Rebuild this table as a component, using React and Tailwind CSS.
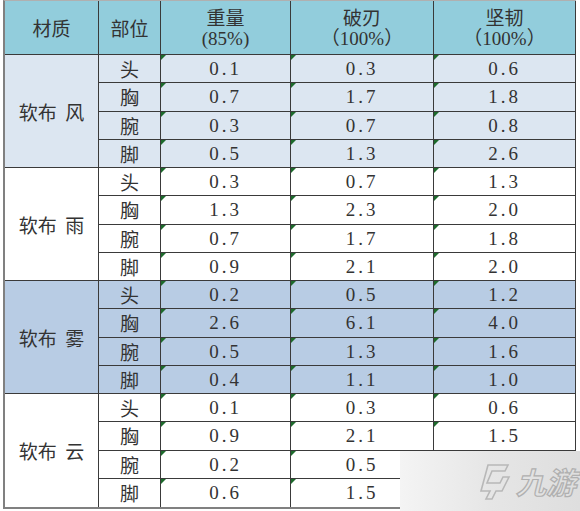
const groups = [
  {
    name: '软布 风',
    bg: 'bg-[#dce6f1]',
    rows: [
      ['头', '0.1', '0.3', '0.6'],
      ['胸', '0.7', '1.7', '1.8'],
      ['腕', '0.3', '0.7', '0.8'],
      ['脚', '0.5', '1.3', '2.6'],
    ],
  },
  {
    name: '软布 雨',
    bg: 'bg-white',
    rows: [
      ['头', '0.3', '0.7', '1.3'],
      ['胸', '1.3', '2.3', '2.0'],
      ['腕', '0.7', '1.7', '1.8'],
      ['脚', '0.9', '2.1', '2.0'],
    ],
  },
  {
    name: '软布 雾',
    bg: 'bg-[#b8cce4]',
    rows: [
      ['头', '0.2', '0.5', '1.2'],
      ['胸', '2.6', '6.1', '4.0'],
      ['腕', '0.5', '1.3', '1.6'],
      ['脚', '0.4', '1.1', '1.0'],
    ],
  },
  {
    name: '软布 云',
    bg: 'bg-white',
    rows: [
      ['头', '0.1', '0.3', '0.6'],
      ['胸', '0.9', '2.1', '1.5'],
      ['腕', '0.2', '0.5', '1.5'],
      ['脚', '0.6', '1.5', '1.5'],
    ],
  },
];

const cjk = "font-['Noto_Sans_CJK_SC',sans-serif]";
const num = "font-['Liberation_Serif','Noto_Sans_CJK_SC',serif]";

function Cell({ className = '', children, marker = false, last = false }) {
  return (
    <div
      className={`relative flex min-h-0 items-center justify-center overflow-hidden leading-none border-[#3a3a3a] ${last ? '' : 'border-b'} border-r ${className}`}
    >
      {marker && (
        <span className="absolute left-0 top-0 h-0 w-0 border-t-[5px] border-r-[5px] border-t-[#1d6a2c] border-r-transparent" />
      )}
      {children}
    </div>
  );
}

export default function App() {
  return (
    <div className="relative h-[511px] w-[580px] overflow-hidden bg-white text-[#333]">
      <div className="ml-[3px] grid h-[509px] w-[573px] grid-cols-[94px_62px_130px_143px_142px] grid-rows-[54px_repeat(16,minmax(0,1fr))] border-b-2 border-l-2 border-t border-b-[#808080] border-l-[#808080] border-t-[#b0b0b0]">
        <Cell className={`bg-[#92cddc] text-[19px] ${cjk}`}>材质</Cell>
        <Cell className={`bg-[#92cddc] text-[19px] ${cjk}`}>部位</Cell>
        <Cell className="bg-[#92cddc]">
          <div className="flex flex-col items-center leading-[22px]">
            <span className={`text-[19px] ${cjk}`}>重量</span>
            <span className={`text-[19px] ${num}`}>(85%)</span>
          </div>
        </Cell>
        <Cell className="bg-[#92cddc]">
          <div className="flex flex-col items-center leading-[22px]">
            <span className={`text-[19px] ${cjk}`}>破刃</span>
            <span className={`text-[19px] ${num}`}>（100%）</span>
          </div>
        </Cell>
        <Cell className="bg-[#92cddc]">
          <div className="flex flex-col items-center leading-[22px]">
            <span className={`text-[19px] ${cjk}`}>坚韧</span>
            <span className={`text-[19px] ${num}`}>（100%）</span>
          </div>
        </Cell>

        {groups.map((group, gi) => {
          const lastGroup = gi === groups.length - 1;
          return group.rows.map((row, ri) => {
            const last = lastGroup && ri === group.rows.length - 1;
            return [
              ri === 0 && (
                <Cell
                  key={`${gi}-name`}
                  last={lastGroup}
                  className={`row-span-4 text-[19px] ${cjk} ${group.bg}`}
                >
                  <span className="whitespace-pre">{group.name.replace(' ', '  ')}</span>
                </Cell>
              ),
              <Cell key={`${gi}-${ri}-p`} last={last} className={`text-[19px] ${cjk} ${group.bg}`}>
                {row[0]}
              </Cell>,
              ...row.slice(1).map((value, ci) => (
                <Cell
                  key={`${gi}-${ri}-${ci}`}
                  marker
                  last={last}
                  className={`text-[19px] tracking-[3px] ${num} ${group.bg}`}
                >
                  {value}
                </Cell>
              )),
            ];
          });
        })}
      </div>

      {/* watermark */}
      <div className="absolute left-[400px] top-[451px] flex h-[60px] w-[180px] items-center justify-end gap-1 bg-gradient-to-r from-[#f4f4f4] via-[#e6e6e6] to-[#dedede] pr-1">
        <svg width="34" height="40" viewBox="0 0 34 40" fill="none" stroke="#b8b8b8" strokeWidth="1.6">
          <path d="M10 4 L30 4 L27 10 L14 10 L9 22 L22 22 L25 16 L31 16 L24 30 L18 30 L14 38 L8 38 L12 30 L3 30 Z" />
        </svg>
        <span className={`text-[30px] font-bold italic leading-none text-transparent [-webkit-text-stroke:1.2px_#b0b0b0] ${cjk}`}>
          九游
        </span>
      </div>
    </div>
  );
}
